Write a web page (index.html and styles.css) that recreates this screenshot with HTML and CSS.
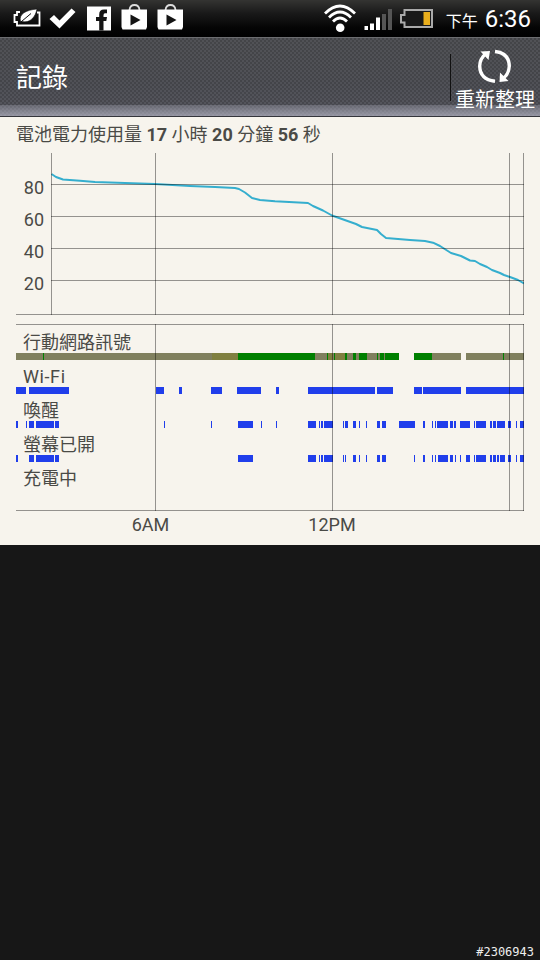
FILE: index.html
```html
<!DOCTYPE html>
<html lang="zh-Hant">
<head>
  <meta charset="UTF-8">
  <title>記錄</title>
  <link rel="stylesheet" href="styles.css">
</head>
<body>
  <div class="statusbar">
    <div class="notifications">
      <svg width="30" height="37" viewBox="12 0 30 37">
        <path d="M20 12H17V15H14.500V22H17V25.500H39.500V12.500H37" fill="none" stroke="#fff" stroke-width="1.800"/>
        <path d="M20.500 21.500C18.500 14 26 10 37 9C35.500 17 30 23.500 22 21.500Z" fill="#fff" stroke="#111" stroke-width=".6"/>
        <path d="M18.500 24L31 13.500" stroke="#111" stroke-width="1"/>
      </svg>
      <svg width="28" height="37" viewBox="48 0 28 37">
        <path d="M49.500 19L54 15L59.500 20.500L71.500 8.500L75.500 12L59.500 28.500Z" fill="#fff"/>
      </svg>
      <svg width="26" height="37" viewBox="86 0 26 37">
        <path d="M87 6.500H111V30.500H87Z" fill="#fff"/>
        <path d="M99.200 30.500V21H96V17H99.200V14.500Q99.200 9.500 104 9.500H107V13.300H105Q103.500 13.300 103.500 15.200V17H107L106.300 21H103.500V30.500Z" fill="#141414"/>
      </svg>
      <svg width="28" height="37" viewBox="120 0 28 37">
        <path d="M129.500 10Q130 5 134.500 5Q139 5 139.500 10" fill="none" stroke="#ddd" stroke-width="1.800"/>
        <path d="M121.500 9.500H147V27L146 29.500H122.500L121.500 27Z" fill="#fff"/>
        <path d="M130.500 14.500V25.500L140.500 20Z" fill="#141414"/>
      </svg>
      <svg width="28" height="37" viewBox="120 0 28 37">
        <path d="M129.500 10Q130 5 134.500 5Q139 5 139.500 10" fill="none" stroke="#ddd" stroke-width="1.800"/>
        <path d="M121.500 9.500H147V27L146 29.500H122.500L121.500 27Z" fill="#fff"/>
        <path d="M130.500 14.500V25.500L140.500 20Z" fill="#141414"/>
      </svg>
    </div>
    <div class="system">
      <svg width="34" height="37" viewBox="323 0 34 37">
        <g fill="none" stroke="#fff" stroke-width="2.800">
          <path d="M325 13.500Q340 -1.500 355 13.500"/>
          <path d="M329 17.500Q340 6.500 351 17.500"/>
          <path d="M333 21.500Q340 14.500 347 21.500"/>
        </g>
        <circle cx="340.200" cy="27.700" r="4.300" fill="#fff"/>
      </svg>
      <svg width="30" height="37" viewBox="363 0 30 37">
        <path d="M364.500 26H368V30H364.500ZM370 23.500H374V30H370ZM376 17.500H380V30H376Z" fill="#fff"/>
        <path d="M382 14H386V30H382ZM388 9H392V30H388Z" fill="#555"/>
      </svg>
      <svg width="36" height="37" viewBox="398 0 36 37">
        <path d="M404.500 10H432V27H404.500V22.500H401V15H404.500Z" fill="#191919" stroke="#aaa" stroke-width="2"/>
        <path d="M423.500 12H430V25H423.500Z" fill="#e9ae1c"/>
      </svg>
      <div class="clock"><span class="ampm">下午</span><span>6:36</span></div>
    </div>
  </div>

  <div class="header">
    <h1>記錄</h1>
    <div class="refresh">
      <svg width="36" height="36" viewBox="477 48 36 36">
        <g fill="none" stroke="#fff" stroke-width="3.400">
          <path d="M495 81.300Q480 79.500 479.700 66Q480 58.500 485.500 54"/>
          <path d="M495 51.500Q509 53 509.300 66Q509 74 503.500 78"/>
        </g>
        <path d="M480.500 51.500L490 51L488.500 60Z" fill="#fff"/>
        <path d="M500 72.500L508.500 81L499.500 82Z" fill="#fff"/>
      </svg>
      <span>重新整理</span>
    </div>
  </div>

  <div class="panel">
    <p class="usage">電池電力使用量 <b>17</b> 小時 <b>20</b> 分鐘 <b>56</b> 秒</p>

    <svg class="chart" width="508" height="162" viewBox="16 153 508 162">
      <path class="level" d="M51.500 174L56 177L63 179.500L80 180.700L95 182L125 183L155 184L190 186L215 187L235 188L239 189L245 192.500L252 198L260 200L275 201.300L308 203L313 206L323 210.500L332 215.500L356 224L362 227L377 230L381 234L386 238L410 240L425 241L433 242.700L440 246L451 253L461 256L470 260.500L475 261L480 264L487 267L492 270L500 273L504 275L510 277L518 280L524 283.500"/>
      <path class="grid" d="M51 184.500H524M51 216.500H524M51 248.500H524M51 280.500H524M16 314.500H524M51.500 153V315M155.500 153V315M332.500 153V315M509.500 153V315M523.500 153V315"/>
      <g class="percent">
        <text x="44" y="194">80</text>
        <text x="44" y="226">60</text>
        <text x="44" y="258">40</text>
        <text x="44" y="290">20</text>
      </g>
    </svg>

    <div class="history">
      <div class="row">
        <span>行動網路訊號</span>
        <svg width="508" height="7" viewBox="16 0 508 7">
          <path fill="#80805e" d="M16 0H399V7H16ZM432 0H461V7H432ZM466 0H524V7H466Z"/>
          <path fill="#808040" d="M212 0H238V7H212ZM328 0H333V7H328ZM335 0H345V7H335Z"/>
          <path fill="#008000" d="M43 0h1v7h-1zM238 0h77v7h-77zM327 0h1v7h-1zM334 0h1v7h-1zM345 0h2v7h-2zM353 0h3v7h-3zM359 0h8v7h-8zM377 0h1v7h-1zM380 0h4v7h-4zM385 0h14v7h-14zM414 0h18v7h-18zM503 0h1v7h-1z"/>
        </svg>
      </div>
      <div class="row">
        <span class="latin">Wi-Fi</span>
        <svg width="508" height="7" viewBox="16 0 508 7">
          <path class="on" d="M16 0H26V7H16ZM29 0H69V7H29ZM156 0H164V7H156ZM179 0H182V7H179ZM211 0H222V7H211ZM237 0H261V7H237ZM276 0H279V7H276ZM308 0H375V7H308ZM377 0H393V7H377ZM414 0H422V7H414ZM423 0H461V7H423ZM466 0H524V7H466Z"/>
        </svg>
      </div>
      <div class="row">
        <span>喚醒</span>
        <svg width="508" height="7" viewBox="16 0 508 7">
          <path class="on" d="M16 0h2v7h-2zM26 0h1v7h-1zM29 0h5v7h-5zM36 0h18v7h-18zM55 0h4v7h-4zM164 0h1v7h-1zM211 0h1v7h-1zM238 0h15v7h-15zM261 0h1v7h-1zM276 0h1v7h-1zM308 0h8v7h-8zM319 0h1v7h-1zM321 0h2v7h-2zM324 0h9v7h-9zM343 0h1v7h-1zM345 0h3v7h-3zM353 0h3v7h-3zM359 0h1v7h-1zM366 0h1v7h-1zM377 0h3v7h-3zM382 0h4v7h-4zM399 0h16v7h-16zM423 0h2v7h-2zM432 0h1v7h-1zM435 0h1v7h-1zM437 0h11v7h-11zM450 0h3v7h-3zM454 0h2v7h-2zM460 0h10v7h-10zM474 0h1v7h-1zM476 0h10v7h-10zM490 0h2v7h-2zM493 0h3v7h-3zM497 0h8v7h-8zM508 0h3v7h-3zM516 0h1v7h-1zM520 0h4v7h-4z"/>
        </svg>
      </div>
      <div class="row">
        <span>螢幕已開</span>
        <svg width="508" height="7" viewBox="16 0 508 7">
          <path class="on" d="M16 0h2v7h-2zM29 0h5v7h-5zM36 0h18v7h-18zM55 0h4v7h-4zM238 0h15v7h-15zM308 0h8v7h-8zM319 0h1v7h-1zM321 0h2v7h-2zM324 0h9v7h-9zM343 0h1v7h-1zM345 0h1v7h-1zM353 0h3v7h-3zM359 0h1v7h-1zM366 0h1v7h-1zM377 0h3v7h-3zM382 0h4v7h-4zM414 0h1v7h-1zM423 0h2v7h-2zM432 0h1v7h-1zM435 0h1v7h-1zM438 0h10v7h-10zM450 0h3v7h-3zM455 0h1v7h-1zM460 0h1v7h-1zM466 0h4v7h-4zM474 0h1v7h-1zM476 0h10v7h-10zM490 0h2v7h-2zM493 0h3v7h-3zM497 0h2v7h-2zM500 0h5v7h-5zM508 0h3v7h-3zM516 0h1v7h-1zM520 0h4v7h-4z"/>
        </svg>
      </div>
      <div class="row">
        <span>充電中</span>
      </div>
      <svg class="overlay" width="508" height="187" viewBox="16 324 508 187">
        <path class="grid" d="M16 324.500H524M16 510.500H524M155.500 324V511M332.500 324V511M509.500 324V511M523.500 324V511"/>
      </svg>
    </div>

    <svg class="hours" width="508" height="34" viewBox="16 511 508 34">
      <text x="150.500" y="531">6AM</text>
      <text x="332" y="531">12PM</text>
    </svg>
  </div>

  <div class="footer">#2306943</div>
</body>
</html>
```

FILE: styles.css
```css
body {
  margin: 0;
  width: 540px;
  height: 960px;
  display: flex;
  flex-direction: column;
  overflow: hidden;
  background: #171717;
  font-family: Roboto, "Noto Sans CJK TC", sans-serif;
}
svg {
  display: block;
}
.statusbar {
  height: 37px;
  display: flex;
  justify-content: space-between;
  padding: 0 9px 0 12px;
  background: linear-gradient(#343432, #1a1a1a 35%, #050505 75%, #000);
  color: #fff;
}
.notifications {
  display: flex;
  gap: 8px;
}
.notifications svg:nth-child(1) {
  margin-right: -2px;
}
.notifications svg:nth-child(2) {
  margin-right: 2px;
}
.system {
  display: flex;
}
.system svg {
  margin-right: 6px;
}
.system svg:nth-child(3) {
  margin-left: -1px;
}
.clock {
  display: flex;
  align-items: baseline;
  gap: 7px;
  margin-left: 6px;
  font-size: 24px;
  line-height: 38px;
  white-space: nowrap;
}
.ampm {
  font-size: 16px;
}
.header {
  box-sizing: border-box;
  height: 80px;
  display: flex;
  justify-content: space-between;
  border-top: 1px solid #6c6d70;
  border-bottom: 1px solid #34353b;
  background:
    linear-gradient(transparent 67px, rgba(170, 170, 185, .3) 67px, rgba(175, 175, 190, .75)),
    repeating-conic-gradient(rgba(0, 0, 0, .16) 0 25%, transparent 0 50%) 0 0 / 4px 4px,
    linear-gradient(#515256, #505157 60%, #56575f);
  color: #fff;
}
.header h1 {
  margin: 0 0 0 16px;
  font-size: 26px;
  font-weight: 400;
  line-height: 80px;
}
.refresh {
  width: 90px;
  display: flex;
  flex-direction: column;
  align-items: center;
  padding-top: 10px;
  background: linear-gradient(#111, #111) 0 16px / 1px 47px no-repeat;
  font-size: 20px;
  line-height: 32px;
}
.panel {
  height: 428px;
  padding: 0 16px;
  background: #f7f4ed;
  color: #4a4a46;
}
.usage {
  margin: 0;
  height: 36px;
  font-size: 18px;
  line-height: 36px;
  white-space: nowrap;
}
.chart {
  margin-bottom: 9px;
}
.grid {
  fill: none;
  stroke: rgba(0, 0, 0, .4);
  stroke-width: 1;
}
.level {
  fill: none;
  stroke: #35aece;
  stroke-width: 2;
  stroke-linejoin: round;
}
.percent text,
.hours text {
  fill: #4a4a46;
  font-size: 18px;
}
.percent text {
  text-anchor: end;
}
.hours text {
  text-anchor: middle;
}
.history {
  position: relative;
  box-sizing: border-box;
  height: 187px;
  padding-top: 2px;
}
.row {
  height: 34px;
  font-size: 18px;
}
.row span {
  display: block;
  height: 27px;
  padding-left: 7px;
  line-height: 34px;
}
.row .latin {
  letter-spacing: .6px;
}
.on {
  fill: #203eeb;
}
.overlay {
  position: absolute;
  top: 0;
  left: 0;
}
.footer {
  margin-top: auto;
  padding-right: 6px;
  color: #eee;
  font-family: "DejaVu Sans Mono", monospace;
  font-size: 12px;
  line-height: 15px;
  text-align: right;
}
```
